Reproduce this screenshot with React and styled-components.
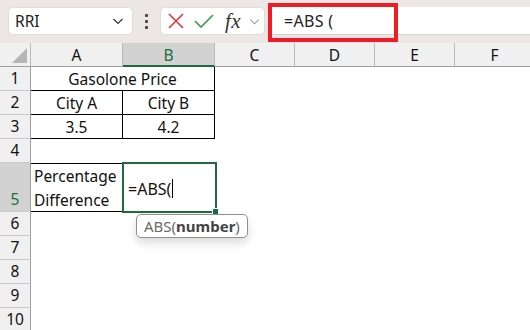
import styled, { createGlobalStyle } from 'styled-components'

const GlobalStyle = createGlobalStyle`
  html, body {
    margin: 0;
    padding: 0;
    background: #fff;
    font-family: "Noto Sans", "Liberation Sans", sans-serif;
    overflow: hidden;
  }
`

const Window = styled.div`
  width: 530px;
  height: 330px;
  overflow: hidden;
  display: flex;
  flex-direction: column;
`

const Toolbar = styled.div`
  height: 43px;
  flex: none;
  background: #ece6e6;
  display: flex;
  align-items: flex-start;
  padding-top: 7px;
  box-sizing: border-box;
`

const NameBox = styled.div`
  margin-left: 8px;
  width: 125px;
  height: 28px;
  box-sizing: border-box;
  background: #fff;
  border-radius: 5px;
  border: 1px solid #e2dcdc;
  display: flex;
  align-items: center;
  justify-content: space-between;
  padding: 0 8px 0 6px;
  font-size: 15.5px;
  color: #222;
`

const Dots = styled.div`
  width: 27px;
  height: 28px;
  display: flex;
  flex-direction: column;
  align-items: center;
  justify-content: center;
  gap: 3px;

  span {
    width: 3px;
    height: 3px;
    background: #444;
    border-radius: 1px;
  }
`

const IconBox = styled.div`
  width: 105px;
  height: 28px;
  box-sizing: border-box;
  background: #fff;
  border-radius: 5px;
  border: 1px solid #e2dcdc;
  display: flex;
  align-items: center;
  padding-left: 6px;
  gap: 8px;
`

const Fx = styled.span`
  font-family: "Liberation Serif", "DejaVu Serif", serif;
  font-style: italic;
  font-size: 21px;
  line-height: 1;
  color: #333;
  margin-left: 2px;
  letter-spacing: 0.5px;
`

const FormulaField = styled.div`
  position: relative;
  margin-left: 3px;
  flex: 1;
  height: 28px;
  background: #fff;
  border-bottom: 1px solid #d6d0d0;
  box-sizing: border-box;
  display: flex;
  align-items: center;
  padding-left: 16px;
  font-size: 16px;
  color: #222;
  letter-spacing: 0.3px;
`

const Highlight = styled.div`
  position: absolute;
  left: 0;
  top: -4px;
  width: 130px;
  height: 39px;
  box-sizing: border-box;
  border: 4px solid #ee1c25;
`

const Sheet = styled.div`
  display: grid;
  grid-template-columns: 31px 92px 92px 80px 80px 80px 80px;
  grid-template-rows: 24px 24px 24px 24px 24px 49px repeat(5, 24px);
  font-size: 15.5px;
  color: #111;
`

const Corner = styled.div`
  background: #f0f0f0;
  border-right: 1px solid #b8b8b8;
  border-bottom: 1px solid #9e9e9e;
  display: flex;
  align-items: flex-end;
  justify-content: flex-end;
  padding: 0 3px 3px 0;
`

const ColHead = styled.div`
  background: ${p => (p.$selected ? '#d2d2d2' : '#f0f0f0')};
  color: ${p => (p.$selected ? '#1d6b3f' : '#111')};
  border-right: 1px solid #b8b8b8;
  border-bottom: ${p => (p.$selected ? '2px solid #1d6b3f' : '1px solid #9e9e9e')};
  display: flex;
  align-items: center;
  justify-content: center;
  padding-top: 1px;
`

const RowHead = styled.div`
  background: ${p => (p.$selected ? '#d2d2d2' : '#f0f0f0')};
  color: ${p => (p.$selected ? '#1d6b3f' : '#111')};
  border-right: 1px solid #9e9e9e;
  border-bottom: 1px solid #c8c8c8;
  display: flex;
  align-items: flex-end;
  justify-content: center;
  padding-bottom: 1px;
  line-height: 22px;
`

const Cell = styled.div`
  grid-column: span ${p => p.$span || 1};
  display: flex;
  align-items: center;
  justify-content: ${p => (p.$left ? 'flex-start' : 'center')};
  padding: 0 3px;
  border-right: ${p => (p.$boxed ? '1px solid #000' : 'none')};
  border-bottom: ${p => (p.$boxed ? '1px solid #000' : 'none')};
  border-top: ${p => (p.$top ? '1px solid #000' : 'none')};
  line-height: 24px;
  white-space: pre-line;
`

const ActiveCell = styled.div`
  position: relative;
  display: flex;
  align-items: center;
  padding: 2px 0 0 5px;
  font-size: 16px;

  &::before {
    content: '';
    position: absolute;
    left: -1px;
    top: -1px;
    right: -2px;
    bottom: -1px;
    border: 2px solid #1d6b3f;
  }

  &::after {
    content: '';
    position: absolute;
    right: -4px;
    bottom: -3px;
    width: 5px;
    height: 5px;
    background: #1d6b3f;
    border: 1px solid #fff;
  }
`

const Caret = styled.span`
  display: inline-block;
  width: 1px;
  height: 19px;
  background: #000;
  margin-left: 1px;
`

const Tip = styled.div`
  position: absolute;
  left: 136px;
  top: 214px;
  height: 24px;
  box-sizing: border-box;
  padding: 0 7px;
  display: flex;
  align-items: center;
  background: #fff;
  border: 1px solid #8f8f8f;
  border-radius: 5px;
  box-shadow: 0 5px 10px rgba(0, 0, 0, 0.14);
  font-size: 15px;
  color: #6a6a6a;

  b {
    color: #444;
    font-weight: 700;
  }
`

const Chevron = ({ color = '#333', size = 12 }) => (
  <svg width={size} height={size} viewBox="0 0 12 12" fill="none">
    <path d="M1.5 4 L6 8.5 L10.5 4" stroke={color} strokeWidth="1.2" />
  </svg>
)

const columns = ['A', 'B', 'C', 'D', 'E', 'F']

export default function App() {
  const emptyRow = n => (
    <>
      <RowHead>{n}</RowHead>
      {columns.map(c => <Cell key={c} />)}
    </>
  )

  return (
    <Window>
      <GlobalStyle />
      <Toolbar>
        <NameBox>
          RRI
          <Chevron />
        </NameBox>
        <Dots>
          <span />
          <span />
          <span />
        </Dots>
        <IconBox>
          <svg width="18" height="18" viewBox="0 0 18 18">
            <path d="M2 2 L16 16 M16 2 L2 16" stroke="#e5343c" strokeWidth="1.6" />
          </svg>
          <svg width="22" height="18" viewBox="0 0 22 18">
            <path d="M2 9 L8 15 L20 3" stroke="#3e9b4f" strokeWidth="1.6" fill="none" />
          </svg>
          <Fx>fx</Fx>
          <Chevron color="#9a9a9a" size={11} />
        </IconBox>
        <FormulaField>
          =ABS (
          <Highlight />
        </FormulaField>
      </Toolbar>

      <Sheet>
        <Corner>
          <svg width="15" height="15" viewBox="0 0 15 15">
            <path d="M15 0 L15 15 L0 15 Z" fill="#b6b6b6" />
          </svg>
        </Corner>
        {columns.map(c => (
          <ColHead key={c} $selected={c === 'B'}>{c}</ColHead>
        ))}

        <RowHead>1</RowHead>
        <Cell $span={2} $boxed>Gasolone Price</Cell>
        <Cell /><Cell /><Cell /><Cell />

        <RowHead>2</RowHead>
        <Cell $boxed>City A</Cell>
        <Cell $boxed>City B</Cell>
        <Cell /><Cell /><Cell /><Cell />

        <RowHead>3</RowHead>
        <Cell $boxed>3.5</Cell>
        <Cell $boxed>4.2</Cell>
        <Cell /><Cell /><Cell /><Cell />

        {emptyRow(4)}

        <RowHead $selected>5</RowHead>
        <Cell $boxed $top $left>{'Percentage\nDifference'}</Cell>
        <ActiveCell>
          =ABS(<Caret />
        </ActiveCell>
        <Cell /><Cell /><Cell /><Cell />

        {emptyRow(6)}
        {emptyRow(7)}
        {emptyRow(8)}
        {emptyRow(9)}
        {emptyRow(10)}
      </Sheet>

      <Tip>
        ABS(<b>number</b>)
      </Tip>
    </Window>
  )
}
